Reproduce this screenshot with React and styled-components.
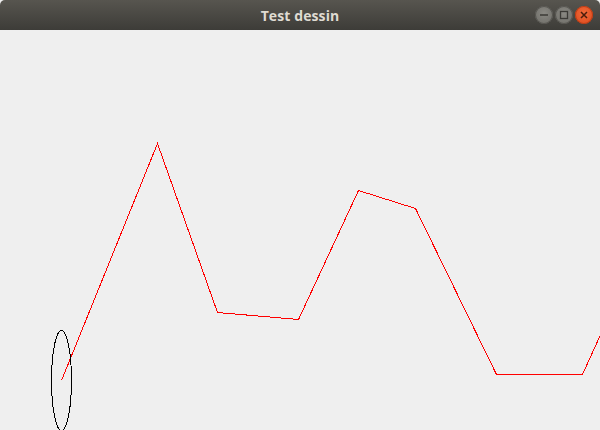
import React from 'react'
import styled, { createGlobalStyle } from 'styled-components';

const GlobalStyle = createGlobalStyle`
    html, body {
        margin: 0;
        padding: 0;
        background: #efefef;
    }
`

const Window = styled.div`
    display: flex;
    flex-direction: column;
    width: 600px;
    height: 430px;
    overflow: hidden;
    background: #efefef;
`

const TitleBar = styled.div`
    position: relative;
    display: flex;
    align-items: center;
    justify-content: center;
    height: 30px;
    flex: none;
    background: linear-gradient(#57554f, #3d3c38);
    border-radius: 5px 5px 0 0;
`

const Title = styled.span`
    font-family: "Open Sans", "DejaVu Sans", sans-serif;
    font-weight: 700;
    font-size: 14px;
    color: #dfdbd2;
    letter-spacing: 0.1px;
`

const Controls = styled.div`
    position: absolute;
    right: 7px;
    top: 6px;
    display: flex;
    gap: 2px;
`

const CtrlButton = styled.div`
    width: 18px;
    height: 18px;
    border-radius: 50%;
    display: flex;
    align-items: center;
    justify-content: center;
    background: ${p => p.close ? 'radial-gradient(circle at 50% 40%, #f26b3a, #d9461a)' : 'radial-gradient(circle at 50% 40%, #8a8983, #6b6a65)'};
    box-shadow: inset 0 0 0 1px ${p => p.close ? '#b83c15' : '#55544f'};
`

const Canvas = styled.div`
    flex: 1;
    position: relative;
`

const points = [
    [61, 350], [157, 113], [217, 282], [298, 289], [358, 160],
    [415, 178], [496, 344], [582, 344], [601, 302]
]

const App = () => {
    return (
        <Window>
            <GlobalStyle />
            <TitleBar>
                <Title>Test dessin</Title>
                <Controls>
                    <CtrlButton>
                        <svg width="10" height="10" viewBox="0 0 10 10"><path d="M1 5h8" stroke="#3b3a36" strokeWidth="1.5" /></svg>
                    </CtrlButton>
                    <CtrlButton>
                        <svg width="10" height="10" viewBox="0 0 10 10"><rect x="1.5" y="1.5" width="7" height="7" fill="none" stroke="#3b3a36" strokeWidth="1.3" /></svg>
                    </CtrlButton>
                    <CtrlButton close>
                        <svg width="10" height="10" viewBox="0 0 10 10"><path d="M2 2l6 6M8 2l-6 6" stroke="#4a1d0c" strokeWidth="1.5" /></svg>
                    </CtrlButton>
                </Controls>
            </TitleBar>
            <Canvas>
                <svg width="600" height="400" viewBox="0 0 600 400" shapeRendering="crispEdges">
                    <polyline
                        points={points.map(p => p.map(v => v + 0.5).join(',')).join(' ')}
                        fill="none"
                        stroke="#ff0000"
                        strokeWidth="1"
                    />
                    <ellipse cx="61.5" cy="350.5" rx="10" ry="50" fill="none" stroke="#000" strokeWidth="1" />
                </svg>
            </Canvas>
        </Window>
    )
}

export default App;
